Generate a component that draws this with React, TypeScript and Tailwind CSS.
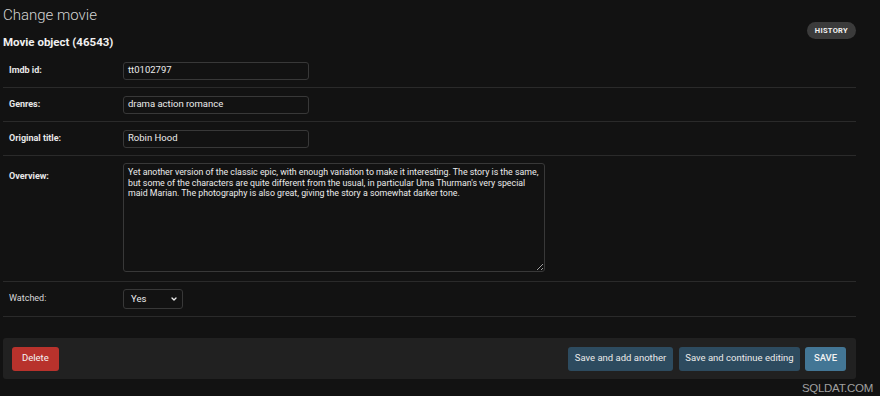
import { ChevronDown } from "lucide-react";

const fields = [
    { label: "Imdb id:", value: "tt0102797" },
    { label: "Genres:", value: "drama action romance" },
    { label: "Original title:", value: "Robin Hood" },
];

const overview =
    "Yet another version of the classic epic, with enough variation to make it interesting. The story is the same, but some of the characters are quite different from the usual, in particular Uma Thurman's very special maid Marian. The photography is also great, giving the story a somewhat darker tone.";

export default function App() {
    return (
        <div className="relative w-[880px] h-[396px] bg-[#121212] text-[#e6e6e6] overflow-hidden font-['Roboto','Liberation_Sans',sans-serif]">
            <div className="ml-[3px] w-[853px]">
                {/* Header */}
                <div className="flex justify-between">
                    <div>
                        <h1 className="pt-[5px] text-[15px] leading-[20px] font-light text-[#d4d4d4]">Change movie</h1>
                        <h2 className="mt-[9px] text-[11.5px] leading-[16px] font-bold text-[#f0f0f0]">Movie object (46543)</h2>
                    </div>
                    <button className="mt-[22px] h-[17px] px-[8px] rounded-full bg-[#3b3b3b] text-[7.5px] font-bold tracking-[0.3px] text-[#f2f2f2] uppercase leading-none">
                        History
                    </button>
                </div>

                {/* Fieldset */}
                <div className="mt-[4px]">
                    {fields.map(f => (
                        <div key={f.label} className="flex items-center h-[34px] border-b border-[#2a2a2a]">
                            <label className="w-[120px] pl-[6px] text-[9px] font-bold text-[#e8e8e8]">{f.label}</label>
                            <div className="w-[186px] h-[18px] border border-[#383838] rounded-[3px] px-[4px] flex items-center text-[9.5px] text-[#ececec]">
                                {f.value}
                            </div>
                        </div>
                    ))}

                    <div className="flex items-start h-[126px] border-b border-[#2a2a2a]">
                        <label className="w-[120px] pl-[6px] pt-[14px] text-[9px] font-bold text-[#e8e8e8]">Overview:</label>
                        <textarea
                            readOnly
                            defaultValue={overview}
                            className="mt-[7px] w-[422px] h-[109px] bg-[#121212] border border-[#383838] rounded-[3px] px-[4px] py-[3px] text-[8.8px] leading-[10.6px] text-[#ececec] outline-none"
                        />
                    </div>

                    <div className="flex items-center h-[35px] border-b border-[#2a2a2a]">
                        <label className="w-[120px] pl-[6px] text-[9px] text-[#d8d8d8]">Watched:</label>
                        <div className="w-[60px] h-[20px] border border-[#383838] rounded-[3px] pl-[7px] pr-[4px] flex items-center justify-between text-[9.5px] text-[#ececec]">
                            <span>Yes</span>
                            <ChevronDown className="w-[8px] h-[8px]" strokeWidth={4} />
                        </div>
                    </div>
                </div>

                {/* Submit row */}
                <div className="mt-[21px] h-[41px] bg-[#212121] rounded-[3px] flex items-center justify-between pl-[9px] pr-[10px]">
                    <button className="h-[24px] px-[10px] rounded-[3px] bg-[#b8322c] text-[9.5px] text-[#f4f4f4]">Delete</button>
                    <div className="flex items-center gap-[6px]">
                        <button className="h-[24px] w-[105px] rounded-[3px] bg-[#2d4b5f] text-[9.5px] text-[#eaeaea]">Save and add another</button>
                        <button className="h-[24px] w-[121px] rounded-[3px] bg-[#2d4b5f] text-[9.5px] text-[#eaeaea]">Save and continue editing</button>
                        <button className="ml-[-1px] h-[24px] w-[41px] rounded-[3px] bg-[#437695] text-[9.5px] font-medium text-[#f2f2f2] uppercase">Save</button>
                    </div>
                </div>
            </div>

            {/* Watermark */}
            <span className="absolute left-[802px] top-[380px] text-[11.5px] tracking-[-0.3px] text-[#a0a0a0] font-['Liberation_Sans',sans-serif]">SQLDAT.COM</span>
        </div>
    );
}
